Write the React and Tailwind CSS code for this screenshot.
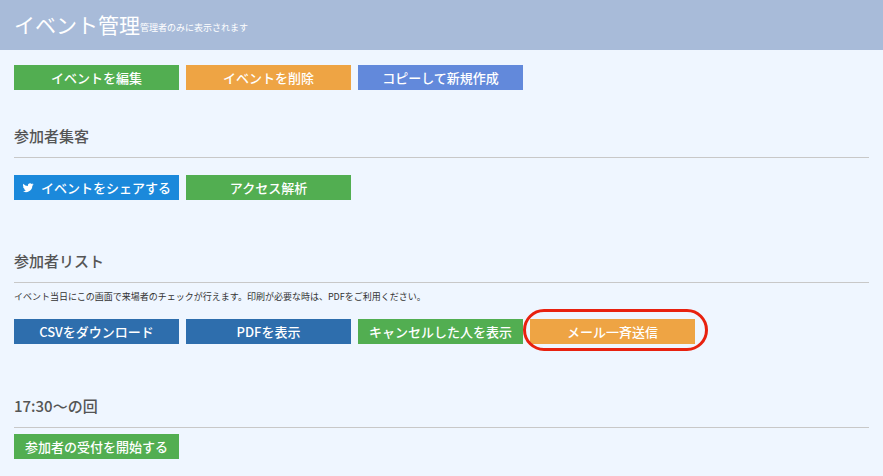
export default function App() {
  const f = { fontFamily: '"Noto Sans CJK JP", "Noto Sans", sans-serif' };
  const Btn = ({ c, children, ring }) => (
    <div className={`relative w-[165px] h-[25px] ${c} text-white text-[13px] font-medium flex items-center justify-center`}>
      {children}
      {ring && <div className="absolute left-[-7px] right-[-13px] top-[-10px] bottom-[-7px] border-[3px] border-[#e8210f] rounded-[22px]" />}
    </div>
  );
  const H = ({ children, mt }) => (
    <div className={mt}>
      <div className="text-[15px] text-[#555] font-medium h-[20px] leading-[20px]">{children}</div>
      <div className="h-px bg-[#c8c8c8] mt-[11px] mr-[14px]" />
    </div>
  );
  return (
    <div style={f} className="w-[883px] h-[476px] bg-[#eff6ff] overflow-hidden">
      <div className="h-[50px] bg-[#a8bbd9] flex items-end pl-[14px] pb-[14px] text-white">
        <span className="text-[21px] leading-[24px]">イベント管理</span>
        <span className="text-[9px] leading-[12px] mb-[2px]">管理者のみに表示されます</span>
      </div>
      <div className="pl-[14px]">
        <div className="flex gap-[7px] mt-[15px]">
          <Btn c="bg-[#52ae51]">イベントを編集</Btn>
          <Btn c="bg-[#eea444]">イベントを削除</Btn>
          <Btn c="bg-[#6289db]">コピーして新規作成</Btn>
        </div>
        <H mt="mt-[36px]">参加者集客</H>
        <div className="flex gap-[7px] mt-[17px]">
          <Btn c="bg-[#1b89db]">
            <svg viewBox="0 0 24 24" className="w-[12px] h-[12px] mr-[7px]" fill="white"><path d="M23 4.6c-.8.4-1.7.6-2.6.7.9-.6 1.6-1.4 2-2.5-.9.5-1.9.9-2.9 1.1A4.5 4.5 0 0 0 11.8 8 12.8 12.8 0 0 1 2.5 3.3a4.5 4.5 0 0 0 1.4 6c-.7 0-1.4-.2-2-.6 0 2.2 1.5 4 3.6 4.4-.7.2-1.4.2-2 .1.6 1.8 2.200 3.1 4.2 3.1A9 9 0 0 1 1 18.2 12.8 12.8 0 0 0 20.7 7.4c.9-.6 1.7-1.5 2.3-2.4z"/></svg>
            イベントをシェアする
          </Btn>
          <Btn c="bg-[#52ae51]">アクセス解析</Btn>
        </div>
        <H mt="mt-[51px]">参加者リスト</H>
        <div className="text-[9px] text-[#333] mt-[8px] leading-[12px]">イベント当日にこの画面で来場者のチェックが行えます。印刷が必要な時は、PDFをご利用ください。</div>
        <div className="flex gap-[7px] mt-[16px]">
          <Btn c="bg-[#2e6ead]">CSVをダウンロード</Btn>
          <Btn c="bg-[#2e6ead]">PDFを表示</Btn>
          <Btn c="bg-[#52ae51]">キャンセルした人を表示</Btn>
          <Btn c="bg-[#eea444]" ring>メール一斉送信</Btn>
        </div>
        <H mt="mt-[52px]">17:30〜の回</H>
        <div className="flex mt-[6px]">
          <Btn c="bg-[#52ae51]">参加者の受付を開始する</Btn>
        </div>
      </div>
    </div>
  );
}
